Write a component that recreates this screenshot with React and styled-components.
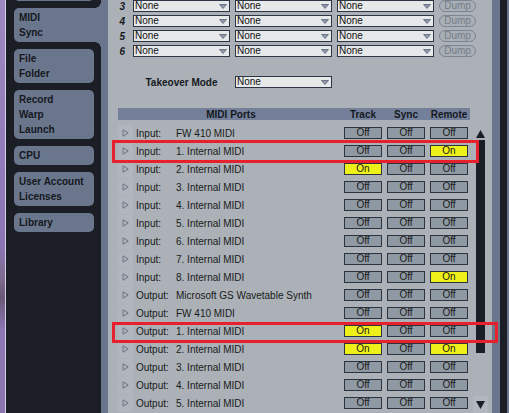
import React from "react";
import styled, { createGlobalStyle } from "styled-components";

const DARK = "#1b1e25";
const SLATE = "#6a768c";
const PANEL = "#abb1b7";

const Global = createGlobalStyle`
  html, body {
    margin: 0;
    padding: 0;
    overflow: hidden;
    background: ${PANEL};
  }
  body {
    font-family: "Liberation Sans", Arial, sans-serif;
  }
`;

const Screen = styled.div`
  position: relative;
  display: flex;
  width: 509px;
  height: 413px;
  overflow: hidden;
`;

const Desktop = styled.div`
  width: 5px;
  background: linear-gradient(
    180deg,
    #9c88c2 0%,
    #907cb8 40%,
    #8a76b2 60%,
    #7d6a8c 68%,
    #6a5878 72%,
    #8c78b4 80%,
    #8a76b0 100%
  );
  border-right: 1px solid #d8d0e6;
`;

const Sidebar = styled.nav`
  width: 87px;
  background: ${DARK};
  padding: 0 0 0 8px;
  display: flex;
  flex-direction: column;
  gap: 7px;
`;

const NavItem = styled.div`
  position: relative;
  width: ${(p) => (p.$active ? "87px" : "80px")};
  padding: 2px 0 2px 5px;
  box-sizing: border-box;
  background: ${SLATE};
  border-radius: ${(p) => (p.$active ? "5px 0 0 5px" : "5px")};
  color: #15181e;
  font-size: 10px;
  font-weight: bold;
  line-height: 15px;
  height: ${(p) => p.$lines * 15 + 4}px;
  margin-top: ${(p) => p.$offset || 0}px;
  flex-shrink: 0;

  ${(p) =>
    p.$active &&
    `
    &::before, &::after {
      content: "";
      position: absolute;
      right: 0;
      width: 6px;
      height: 6px;
    }
    &::before {
      top: -6px;
      background: radial-gradient(circle at 0 0, ${DARK} 5.5px, ${SLATE} 6px);
    }
    &::after {
      bottom: -6px;
      background: radial-gradient(circle at 0 100%, ${DARK} 5.5px, ${SLATE} 6px);
    }
  `}
`;

const Edge = styled.div`
  width: 7px;
  background: ${SLATE};
`;

const Main = styled.main`
  width: 384px;
  background: ${PANEL};
  display: flex;
  flex-direction: column;
`;

const RightFrame = styled.div`
  width: 17px;
  display: flex;
`;

const FrameStrip = styled.div`
  width: ${(p) => p.$w}px;
  background: ${(p) => p.$c};
`;

const SelRow = styled.div`
  display: grid;
  grid-template-columns: 20px 97px 97px 97px 37px;
  column-gap: 5px;
  align-items: center;
  height: 12px;
  margin-bottom: 3px;
  margin-top: ${(p) => p.$top || 0}px;
`;

const Num = styled.div`
  text-align: right;
  padding-right: 3px;
  font-size: 10px;
  font-weight: bold;
  font-style: italic;
  color: #15181e;
`;

const Select = styled.div`
  height: 12px;
  box-sizing: border-box;
  border: 1px solid #2e3646;
  background: #e7e8e9;
  display: flex;
  align-items: center;
  justify-content: space-between;
  padding: 0 2px 0 1px;
  font-size: 10px;
  line-height: 10px;
  color: #111;
`;

const Dump = styled.div`
  height: 12px;
  box-sizing: border-box;
  border: 1px solid #7d8592;
  border-radius: 6px;
  background: #a8afb6;
  color: #747c87;
  font-size: 10px;
  line-height: 10px;
  text-align: center;
`;

const Label = styled.div`
  text-align: center;
  font-size: 10px;
  font-weight: bold;
  color: #15181e;
`;

const PortsArea = styled.section`
  display: flex;
  align-items: flex-start;
  gap: 3px;
  margin-top: 17px;
  padding-left: 10px;
`;

const Table = styled.div`
  width: 352px;
`;

const Header = styled.div`
  display: flex;
  align-items: center;
  height: 12px;
  background: #74809a;
  font-size: 10px;
  font-weight: bold;
  color: #15181e;
`;

const HeaderTitle = styled.div`
  flex: 1;
  text-align: center;
`;

const Cols = styled.div`
  display: flex;
  gap: 5px;
  padding-right: 2px;
`;

const ColLabel = styled.div`
  width: 38px;
  text-align: center;
`;

const Rows = styled.div`
  margin-top: 4px;
`;

const Row = styled.div`
  display: flex;
  align-items: center;
  height: 18px;
  font-size: 10px;
  color: #1a1a1a;
`;

const TriCell = styled.div`
  width: 15px;
  height: 17px;
  background: #b0b6bc;
  display: flex;
  align-items: center;
  justify-content: center;
`;

const Kind = styled.div`
  width: 40px;
  margin-left: 3px;
`;

const Name = styled.div`
  flex: 1;
  white-space: nowrap;
`;

const Toggle = styled.div`
  width: 38px;
  height: 12px;
  box-sizing: border-box;
  border: 1px solid #2d3440;
  background: ${(p) => (p.$on ? "#eef01a" : "#8f99a3")};
  font-size: 10px;
  line-height: 10px;
  text-align: center;
  color: #1a1a1a;
`;

const Scroll = styled.div`
  width: 15px;
  padding-top: 22px;
  display: flex;
  flex-direction: column;
  align-items: center;
`;

const Bar = styled.div`
  width: 9px;
  height: 213px;
  margin-top: 2px;
  background: ${DARK};
`;

const DownBox = styled.div`
  width: 15px;
  height: 18px;
  margin-top: 43px;
  background: #b2b8be;
  display: flex;
  align-items: center;
  justify-content: center;
`;

const Mark = styled.div`
  position: absolute;
  left: ${(p) => p.$x}px;
  top: ${(p) => p.$y}px;
  width: ${(p) => p.$w}px;
  height: ${(p) => p.$h}px;
  box-sizing: border-box;
  border: 3px solid #e8202c;
  pointer-events: none;
`;

const DropArrow = () => (
  <svg width="8" height="5" viewBox="0 0 8 5">
    <polygon points="0.5,0.5 7.5,0.5 4,4.5" fill="#8f98aa" stroke="#5b6376" strokeWidth="0.8" />
  </svg>
);

const Expand = () => (
  <svg width="7" height="8" viewBox="0 0 7 8">
    <polygon points="1,0.8 6.2,4 1,7.2" fill="none" stroke="#6b7282" strokeWidth="1" />
  </svg>
);

const Arrow = ({ up }) => (
  <svg width="9" height="8" viewBox="0 0 9 8">
    <polygon points={up ? "0,8 9,8 4.5,0" : "0,0 9,0 4.5,8"} fill={DARK} />
  </svg>
);

const nav = [
  { lines: [], size: 1, offset: -18 },
  { lines: ["MIDI", "Sync"], active: true },
  { lines: ["File", "Folder"] },
  { lines: ["Record", "Warp", "Launch"] },
  { lines: ["CPU"] },
  { lines: ["User Account", "Licenses"] },
  { lines: ["Library"] },
];

const ports = [
  ["Input:", "FW 410 MIDI", 0, 0, 0],
  ["Input:", "1. Internal MIDI", 0, 0, 1],
  ["Input:", "2. Internal MIDI", 1, 0, 0],
  ["Input:", "3. Internal MIDI", 0, 0, 0],
  ["Input:", "4. Internal MIDI", 0, 0, 0],
  ["Input:", "5. Internal MIDI", 0, 0, 0],
  ["Input:", "6. Internal MIDI", 0, 0, 0],
  ["Input:", "7. Internal MIDI", 0, 0, 0],
  ["Input:", "8. Internal MIDI", 0, 0, 1],
  ["Output:", "Microsoft GS Wavetable Synth", 0, 0, 0],
  ["Output:", "FW 410 MIDI", 0, 0, 0],
  ["Output:", "1. Internal MIDI", 1, 0, 0],
  ["Output:", "2. Internal MIDI", 1, 0, 1],
  ["Output:", "3. Internal MIDI", 0, 0, 0],
  ["Output:", "4. Internal MIDI", 0, 0, 0],
  ["Output:", "5. Internal MIDI", 0, 0, 0],
];

export default function App() {
  return (
    <>
      <Global />
      <Screen>
        <Desktop />
        <Sidebar>
          {nav.map((n, i) => (
            <NavItem
              key={i}
              $lines={n.size || n.lines.length}
              $active={n.active}
              $offset={n.offset}
            >
              {n.lines.map((l) => (
                <div key={l}>{l}</div>
              ))}
            </NavItem>
          ))}
        </Sidebar>
        <Edge />
        <Main>
          {[3, 4, 5, 6].map((n) => (
            <SelRow key={n}>
              <Num>{n}</Num>
              <Select>
                None <DropArrow />
              </Select>
              <Select>
                None <DropArrow />
              </Select>
              <Select>
                None <DropArrow />
              </Select>
              <Dump>Dump</Dump>
            </SelRow>
          ))}
          <SelRow $top={16}>
            <span />
            <Label>Takeover Mode</Label>
            <Select>
              None <DropArrow />
            </Select>
          </SelRow>
          <PortsArea>
            <Table>
              <Header>
                <HeaderTitle>MIDI Ports</HeaderTitle>
                <Cols>
                  <ColLabel>Track</ColLabel>
                  <ColLabel>Sync</ColLabel>
                  <ColLabel>Remote</ColLabel>
                </Cols>
              </Header>
              <Rows>
                {ports.map(([kind, name, t, s, r], i) => (
                  <Row key={i}>
                    <TriCell>
                      <Expand />
                    </TriCell>
                    <Kind>{kind}</Kind>
                    <Name>{name}</Name>
                    <Cols>
                      <Toggle $on={t}>{t ? "On" : "Off"}</Toggle>
                      <Toggle $on={s}>{s ? "On" : "Off"}</Toggle>
                      <Toggle $on={r}>{r ? "On" : "Off"}</Toggle>
                    </Cols>
                  </Row>
                ))}
              </Rows>
            </Table>
            <Scroll>
              <Arrow up />
              <Bar />
              <DownBox>
                <Arrow />
              </DownBox>
            </Scroll>
          </PortsArea>
        </Main>
        <RightFrame>
          <FrameStrip $w={8} $c={SLATE} />
          <FrameStrip $w={7} $c={DARK} />
          <FrameStrip $w={2} $c={SLATE} />
        </RightFrame>
        <Mark $x={112} $y={140} $w={367} $h={23} />
        <Mark $x={112} $y={322} $w={386} $h={21} />
      </Screen>
    </>
  );
}
